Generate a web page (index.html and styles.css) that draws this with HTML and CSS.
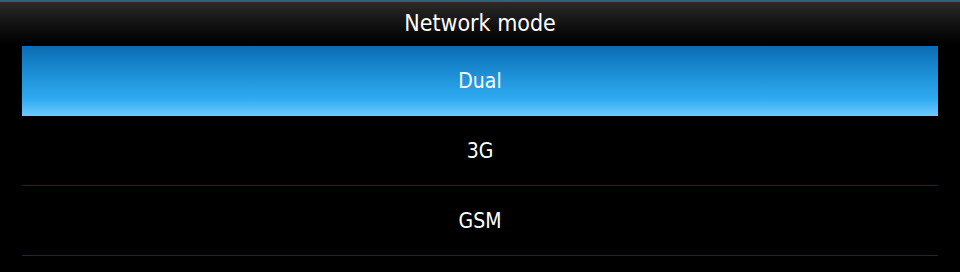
FILE: index.html
```html
<!DOCTYPE html>
<html lang="en">
<head>
    <meta charset="UTF-8">
    <title>Network mode</title>
    <link rel="stylesheet" href="styles.css">
</head>
<body>
    <header class="title-bar">
        <h1>Network mode</h1>
    </header>
    <ul class="options">
        <li class="option selected">Dual</li>
        <li class="option">3G</li>
        <li class="option">GSM</li>
    </ul>
</body>
</html>
```

FILE: styles.css
```css
body {
    margin: 0;
    padding: 0;
    background: #000;
    color: #fff;
    font-family: 'DejaVu Sans Condensed', 'DejaVu Sans', sans-serif;
    width: 960px;
    height: 272px;
    overflow: hidden;
}

.title-bar {
    height: 44px;
    border-top: 2px solid #33607f;
    box-sizing: border-box;
    background: linear-gradient(to bottom, #2a2a2a 0%, #111 55%, #000 100%);
    display: flex;
    align-items: center;
    justify-content: center;
}

.title-bar h1 {
    margin: 0;
    font-size: 23px;
    font-weight: normal;
}

.options {
    list-style: none;
    margin: 2px 22px 0;
    padding: 0;
}

.option {
    height: 69px;
    border-bottom: 1px solid #13293c;
    display: flex;
    align-items: center;
    justify-content: center;
    font-size: 21px;
}

.option.selected {
    height: 70px;
    border-bottom: none;
    background: linear-gradient(to bottom, #0a6cb3 0%, #1c8fd6 40%, #2eaaf0 75%, #6dcbff 100%);
}
```
